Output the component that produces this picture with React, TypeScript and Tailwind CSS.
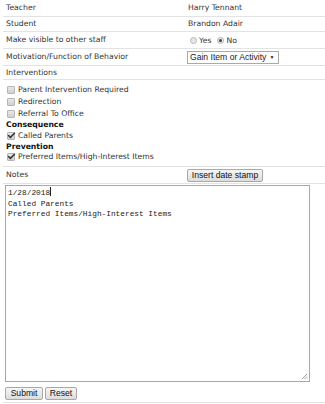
import { Check } from "lucide-react"

const sans = "font-['DejaVu_Sans',Verdana,sans-serif]"
const btn =
  "h-[13px] border border-[#a9a9a9] rounded-[2px] bg-gradient-to-b from-[#f6f6f6] to-[#dcdcdc] text-[8.6px] leading-none text-[#111] font-['Liberation_Sans',Arial,sans-serif] whitespace-nowrap"

function Box({ checked }: { checked?: boolean }) {
  return (
    <span className="relative inline-block w-[8px] h-[8px] border border-[#b5b5b5] bg-gradient-to-b from-[#e8e8e8] to-[#cfcfcf] rounded-[1px] shrink-0">
      {checked && (
        <Check className="absolute -top-[2px] -left-[1px] w-[9px] h-[9px] text-[#333]" strokeWidth={4} />
      )}
    </span>
  )
}

function Radio({ checked }: { checked?: boolean }) {
  return (
    <span className="inline-flex items-center justify-center w-[7px] h-[7px] rounded-full border border-[#b8b8b8] bg-[#e6e6e6] shrink-0">
      {checked && <span className="w-[3px] h-[3px] rounded-full bg-[#444]" />}
    </span>
  )
}

function Row({ label, children, h }: { label: string; children?: React.ReactNode; h: string }) {
  return (
    <div className={`flex items-center border-b border-[#e3e3e3] ${h}`}>
      <div className="w-[182px] pl-[3px] shrink-0">{label}</div>
      <div className="flex-1 flex items-center">{children}</div>
    </div>
  )
}

function Item({ label, checked }: { label: string; checked?: boolean }) {
  return (
    <div className="flex items-center gap-[3px] h-[12px] pl-[4px]">
      <Box checked={checked} />
      <span>{label}</span>
    </div>
  )
}

export default function App() {
  return (
    <div className={`w-[325px] h-[404px] bg-white text-[#333] text-[7.7px] leading-none ${sans} overflow-hidden`}>
      <div className="pl-[3px]">
        <Row label="Teacher" h="h-[17px]">
          <span className="pl-[3px]">Harry Tennant</span>
        </Row>
        <Row label="Student" h="h-[15px]">
          <span className="pl-[3px]">Brandon Adair</span>
        </Row>
        <Row label="Make visible to other staff" h="h-[17px]">
          <div className="flex items-center gap-[2px] pl-[5px] pt-[2px]">
            <Radio />
            <span className="mr-[4px]">Yes</span>
            <Radio checked />
            <span>No</span>
          </div>
        </Row>
        <Row label="Motivation/Function of Behavior" h="h-[17px]">
          <div className="ml-[2px] h-[13px] w-[92px] shrink-0 border border-[#a9a9a9] flex items-center gap-[3px] px-[2px] text-[#222] font-['Liberation_Sans',Arial,sans-serif] text-[8.6px] whitespace-nowrap overflow-hidden">
            <span>Gain Item or Activity</span>
            <span className="text-[5px]">▼</span>
          </div>
        </Row>
        <div className="flex items-center h-[14px] pl-[3px] border-b border-[#e3e3e3]">Interventions</div>
      </div>

      <div className="pl-[3px] pt-[4px]">
        <Item label="Parent Intervention Required" />
        <Item label="Redirection" />
        <Item label="Referral To Office" />
        <div className="pl-[3px] h-[10px] flex items-center font-bold text-[#111]">Consequence</div>
        <Item label="Called Parents" checked />
        <div className="pl-[3px] h-[9px] flex items-center font-bold text-[#111]">Prevention</div>
        <Item label="Preferred Items/High-Interest Items" checked />
      </div>

      <div className="pl-[3px] mt-[3px]">
        <div className="flex items-center h-[18px] border-t border-b border-[#e3e3e3]">
          <div className="w-[184px] pl-[3px]">Notes</div>
          <button className={`${btn} w-[76px]`}>Insert date stamp</button>
        </div>
      </div>

      <div className="pl-[5px] pr-[15px] pt-[1px]">
        <div className="relative h-[197px] border border-[#86afdc] px-[2px] pt-[1px] font-['Liberation_Mono','DejaVu_Sans_Mono',monospace] text-[7.8px] leading-[10.5px] text-[#222] whitespace-pre">
          <div>
            1/28/2018<span className="inline-block w-px h-[9px] bg-[#222] align-[-1px]" />
          </div>
          <div>Called Parents</div>
          <div>Preferred Items/High-Interest Items</div>
          <svg className="absolute right-[1px] bottom-[1px]" width="7" height="7" viewBox="0 0 7 7">
            <path d="M6 1L1 6M6 3.5L3.5 6M6 5.5L5.5 6" stroke="#9a9a9a" strokeWidth="0.9" />
          </svg>
        </div>
      </div>

      <div className="pl-[3px]">
        <div className="flex items-center gap-[2px] h-[21px] pt-[2px] pl-[2px] border-b border-[#e3e3e3]">
          <button className={`${btn} w-[38px]`}>Submit</button>
          <button className={`${btn} w-[32px]`}>Reset</button>
        </div>
      </div>
    </div>
  )
}
